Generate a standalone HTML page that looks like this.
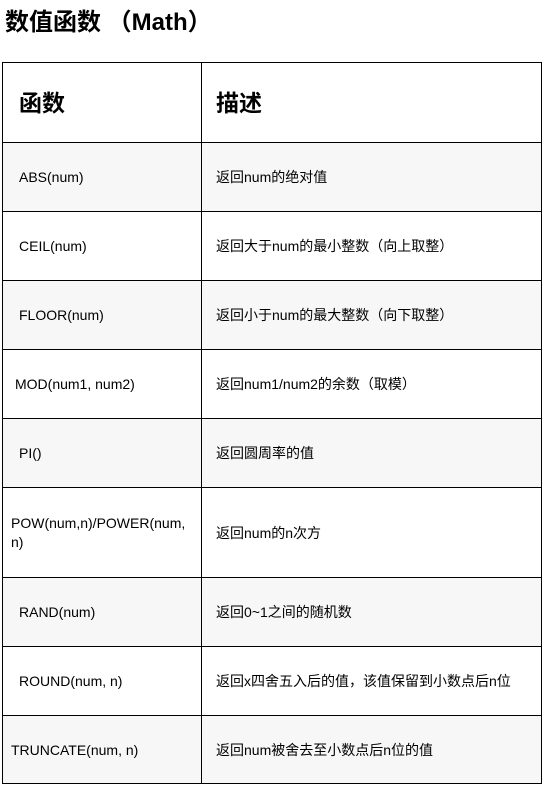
<!DOCTYPE html>
<html><head><meta charset="utf-8"><style>
body{margin:0;width:552px;height:790px;background:#fff;font-family:"Liberation Sans","Noto Sans CJK SC",sans-serif;color:#000;position:relative;overflow:hidden}
h1{position:absolute;left:5px;top:8px;margin:0;font-size:24px;font-weight:bold;line-height:30px}
.r{position:absolute;left:2px;width:540px;border:1px solid #000;border-top:none;box-sizing:border-box}
.c{position:absolute;left:198px;top:0;bottom:0;border-left:1px solid #000}
.t{position:absolute;font-size:14px;line-height:18px;top:50%;transform:translateY(-50%)}
.g{background:#f7f7f7}
</style></head><body>
<h1>数值函数 （Math）</h1>
<div class="r" style="top:62px;height:81px;border-top:1px solid #000"><div class="c"></div>
<div class="t" style="left:16px;font-size:23px;font-weight:bold;line-height:30px">函数</div>
<div class="t" style="left:213px;font-size:23px;font-weight:bold;line-height:30px">描述</div></div>
<div class="r g" style="top:143px;height:69px"><div class="c"></div><div class="t" style="left:16px">ABS(num)</div><div class="t" style="left:213px">返回num的绝对值</div></div>
<div class="r" style="top:212px;height:69px"><div class="c"></div><div class="t" style="left:16px">CEIL(num)</div><div class="t" style="left:213px">返回大于num的最小整数（向上取整）</div></div>
<div class="r g" style="top:281px;height:69px"><div class="c"></div><div class="t" style="left:16px">FLOOR(num)</div><div class="t" style="left:213px">返回小于num的最大整数（向下取整）</div></div>
<div class="r" style="top:350px;height:69px"><div class="c"></div><div class="t" style="left:12px">MOD(num1, num2)</div><div class="t" style="left:213px">返回num1/num2的余数（取模）</div></div>
<div class="r g" style="top:419px;height:69px"><div class="c"></div><div class="t" style="left:16px">PI()</div><div class="t" style="left:213px">返回圆周率的值</div></div>
<div class="r" style="top:488px;height:90px"><div class="c"></div><div class="t" style="left:8px;width:186px;line-height:19px">POW(num,n)/POWER(num,<br>n)</div><div class="t" style="left:213px">返回num的n次方</div></div>
<div class="r g" style="top:578px;height:69px"><div class="c"></div><div class="t" style="left:16px">RAND(num)</div><div class="t" style="left:213px">返回0~1之间的随机数</div></div>
<div class="r" style="top:647px;height:69px"><div class="c"></div><div class="t" style="left:16px">ROUND(num, n)</div><div class="t" style="left:213px">返回x四舍五入后的值，该值保留到小数点后n位</div></div>
<div class="r g" style="top:716px;height:68px"><div class="c"></div><div class="t" style="left:8px">TRUNCATE(num, n)</div><div class="t" style="left:213px">返回num被舍去至小数点后n位的值</div></div>
</body></html>
